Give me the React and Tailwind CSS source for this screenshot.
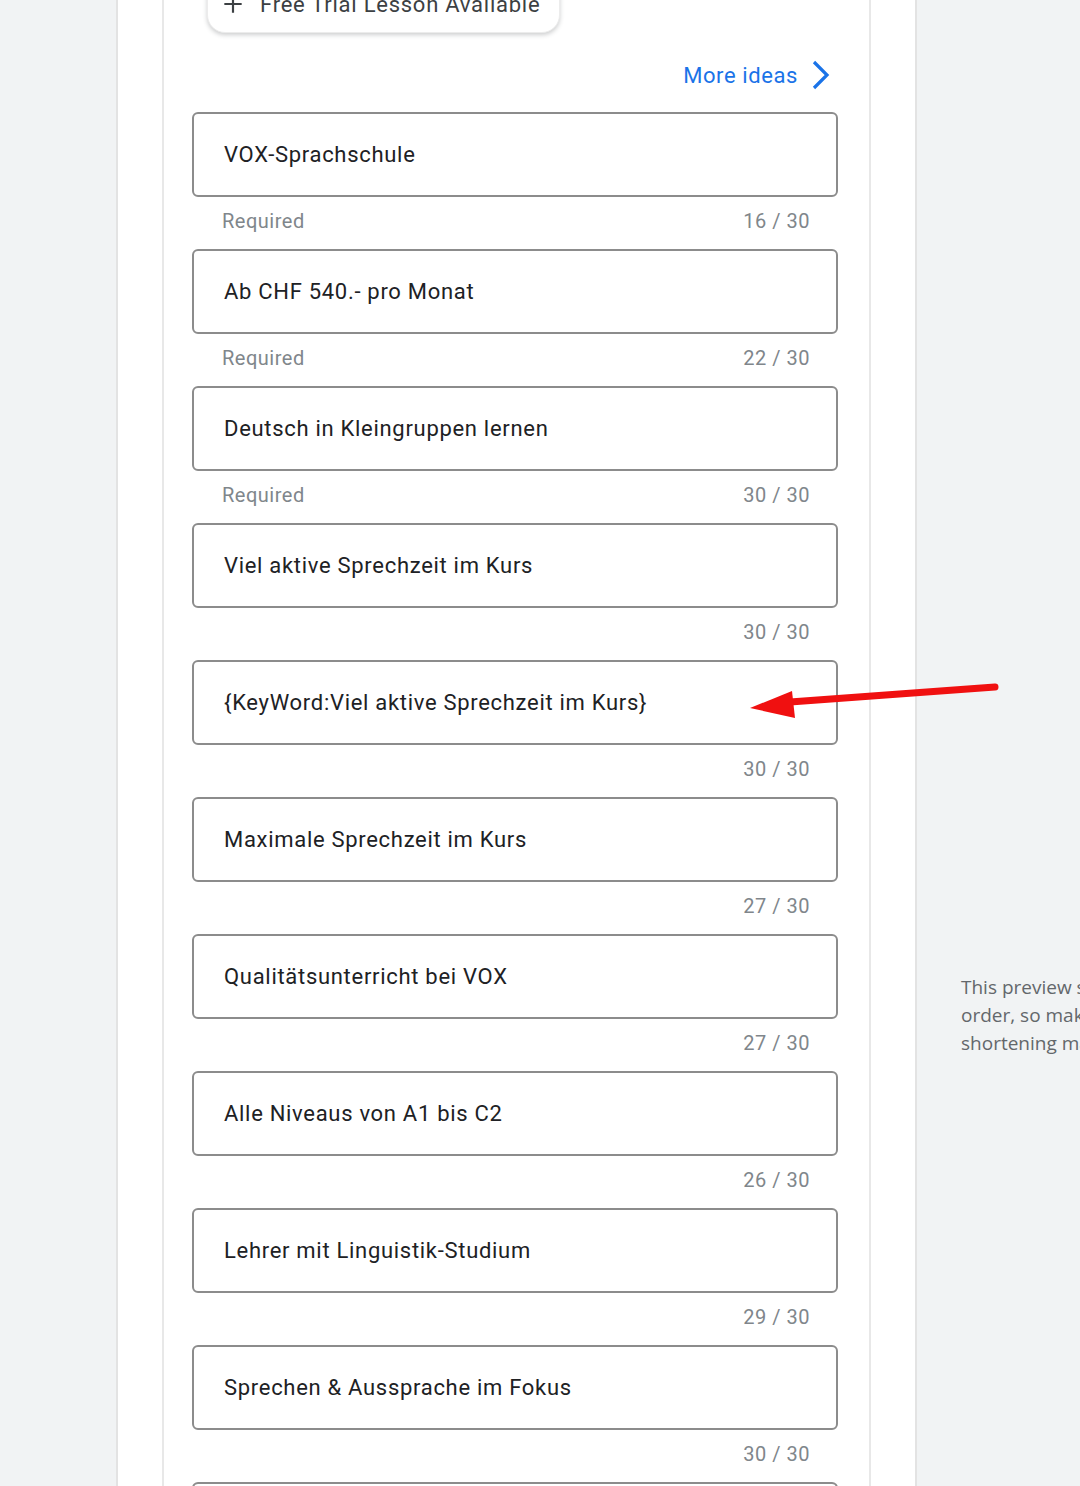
import React from 'react';

const headlines = [
  { text: 'VOX-Sprachschule', count: '16 / 30', required: true },
  { text: 'Ab CHF 540.- pro Monat', count: '22 / 30', required: true },
  { text: 'Deutsch in Kleingruppen lernen', count: '30 / 30', required: true },
  { text: 'Viel aktive Sprechzeit im Kurs', count: '30 / 30' },
  { text: '{KeyWord:Viel aktive Sprechzeit im Kurs}', count: '30 / 30' },
  { text: 'Maximale Sprechzeit im Kurs', count: '27 / 30' },
  { text: 'Qualitätsunterricht bei VOX', count: '27 / 30' },
  { text: 'Alle Niveaus von A1 bis C2', count: '26 / 30' },
  { text: 'Lehrer mit Linguistik-Studium', count: '29 / 30' },
  { text: 'Sprechen & Aussprache im Fokus', count: '30 / 30' },
  { text: '', count: '' },
];

function HeadlineField({ text, count, required }) {
  return (
    <div>
      <div className="h-[85px] flex items-center rounded-[6px] border-2 border-[#8c8c8c] pl-[30px] pr-4 text-[22px] tracking-[0.7px] text-[#202124]">
        {text}
      </div>
      <div className="h-[52px] pt-[12px] pl-[30px] pr-[28px] flex justify-between text-[20px] leading-[24px] tracking-[0.5px] text-[#80868b]">
        <span>{required ? 'Required' : ''}</span>
        <span>{count}</span>
      </div>
    </div>
  );
}

export default function App() {
  return (
    <div
      className="relative h-[1486px] w-[1080px] overflow-hidden bg-[#f1f3f4] flex items-start"
      style={{ fontFamily: 'Roboto, "Liberation Sans", sans-serif' }}
    >
      <div className="w-[116px] shrink-0" />

      {/* Asset panel */}
      <div className="w-[801px] shrink-0 self-stretch flex flex-col bg-white border-l-2 border-r-2 border-[#e3e3e3] pl-[44px] pr-[44px]">
        <div className="flex-1 border-l-2 border-r-2 border-[#e8e8e8] pl-[28px] pr-[31px]">
          {/* Callout chip (scrolled partly out of view) */}
          <div className="-mt-[25px] ml-[15px] w-[353px] h-[58px] rounded-[18px] bg-white shadow-[0_2px_4px_rgba(60,64,67,0.25)] border border-[#ececec] flex items-center pl-[12px] gap-[14px] text-[22px] tracking-[0.75px] text-[#3c4043]">
            <svg width="26" height="26" viewBox="0 0 24 24" className="shrink-0">
              <path d="M12 4v16M4 12h16" stroke="#3c4043" strokeWidth="2" fill="none" />
            </svg>
            <span className="whitespace-nowrap">Free Trial Lesson Available</span>
          </div>

          {/* More ideas */}
          <div className="mt-[22px] h-[40px] mb-[17px] flex items-center justify-end pr-[8px] gap-[12px] text-[22px] tracking-[0.6px] text-[#1a73e8]">
            <span>More ideas</span>
            <svg width="20" height="30" viewBox="0 0 20 30">
              <path d="M4 2l13 13-13 13" stroke="#1a73e8" strokeWidth="3.2" fill="none" />
            </svg>
          </div>

          {headlines.map((h, i) => (
            <HeadlineField key={i} {...h} />
          ))}
        </div>
      </div>

      {/* Preview note */}
      <div className="pl-[44px] pt-[973px] text-[19px] leading-[28px] text-[#63676b] whitespace-nowrap" style={{ fontFamily: '"Open Sans", "DejaVu Sans", sans-serif' }}>
        <div>This preview shows potential ads</div>
        <div>order, so make sure that they make</div>
        <div>shortening may also occur in some</div>
      </div>

      {/* Red annotation arrow */}
      <svg className="absolute left-[740px] top-[670px]" width="270" height="60" viewBox="0 0 270 60">
        <path d="M255 17 L50 32" stroke="#f01010" strokeWidth="7" strokeLinecap="round" fill="none" />
        <path d="M10 38 L52 21 L55 48 Z" fill="#f01010" />
      </svg>
    </div>
  );
}
